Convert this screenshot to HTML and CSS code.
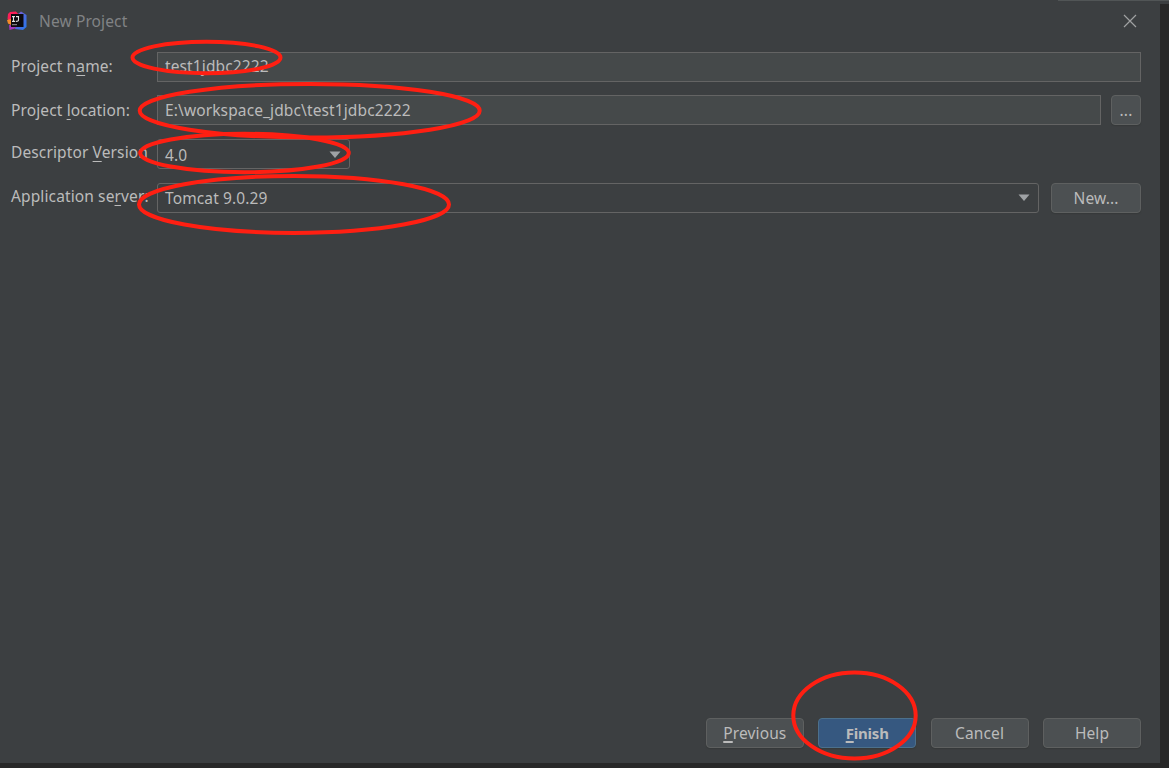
FILE: index.html
```html
<!DOCTYPE html>
<html lang="en">
<head>
<meta charset="UTF-8">
<meta name="viewport" content="width=device-width, initial-scale=1.0">
<title>New Project</title>
<link rel="stylesheet" href="styles.css">
</head>
<body>
<div class="dialog">
    <div class="title-bar">
        <svg class="logo" width="20" height="20" viewBox="0 0 20 20">
            <defs>
                <linearGradient id="blue" x1="0" y1="0" x2="1" y2="1">
                    <stop offset="0" stop-color="#a44fc0"/>
                    <stop offset="0.4" stop-color="#5767dc"/>
                    <stop offset="1" stop-color="#2478ee"/>
                </linearGradient>
            </defs>
            <path d="M11 3 L14 0.5 L19.5 4 V16 L16 19 L8 18 Z" fill="url(#blue)"/>
            <path d="M1 3 L3 1 L9 0.5 L12 4 L4 12 L0.5 8 Z" fill="#fb1e58"/>
            <path d="M0 9 L4 8 V14 L1 12.5 Z" fill="#f68b28"/>
            <path d="M2 14 L10 15 L8 17.5 L2.5 19 Z" fill="#a536bd"/>
            <rect x="4" y="3" width="12.5" height="13" fill="#0c0a10"/>
            <path d="M5 5.6 H8 M6.5 5.6 V10.4 M5 10.4 H8 M9 5.6 H11.5 V9 Q11.5 10.4 8.8 10.4" fill="none" stroke="#e4e4e4" stroke-width="1.1"/>
            <path d="M5 13.7 H10" stroke="#999" stroke-width="1"/>
        </svg>
        <span class="title">New Project</span>
        <svg class="close" width="14" height="14" viewBox="0 0 14 14">
            <path d="M1 1 L13 13 M13 1 L1 13"/>
        </svg>
    </div>

    <form class="form">
        <div class="form-row">
            <label>Project n<u>a</u>me:</label>
            <div class="field">test1jdbc2222</div>
        </div>
        <div class="form-row">
            <label>Project <u>l</u>ocation:</label>
            <div class="field location">E:\workspace_jdbc\test1jdbc2222</div>
            <button type="button" class="browse">...</button>
        </div>
        <div class="form-row">
            <label class="raised">Descriptor <u>V</u>ersion</label>
            <div class="select version">
                <span>4.0</span>
                <svg width="12" height="8" viewBox="0 0 12 8"><path d="M0.5 0.5 H11.5 L6 7 Z"/></svg>
            </div>
        </div>
        <div class="form-row">
            <label class="raised">Application se<u>r</u>ver:</label>
            <div class="select server">
                <span>Tomcat 9.0.29</span>
                <svg width="12" height="8" viewBox="0 0 12 8"><path d="M0.5 0.5 H11.5 L6 7 Z"/></svg>
            </div>
            <button type="button" class="new">New...</button>
        </div>
    </form>

    <div class="footer">
        <button type="button"><u>P</u>revious</button>
        <button type="button" class="primary"><u>F</u>inish</button>
        <button type="button">Cancel</button>
        <button type="button">Help</button>
    </div>
</div>

<div class="window-edge"></div>

<svg class="marks" width="1169" height="768" viewBox="0 0 1169 768">
    <ellipse cx="206.5" cy="57.5" rx="74" ry="15.7"/>
    <ellipse cx="309.7" cy="110.7" rx="170" ry="26.8"/>
    <ellipse cx="244.5" cy="153" rx="104.3" ry="19.2"/>
    <ellipse cx="294" cy="204.4" rx="155" ry="28.5"/>
    <ellipse cx="854.5" cy="715.5" rx="61.2" ry="43"/>
</svg>
</body>
</html>
```

FILE: styles.css
```css
body {
    margin: 0;
    width: 1169px;
    height: 768px;
    overflow: hidden;
    position: relative;
    background-color: #282828;
    color: #bbbbbb;
    font-family: 'Noto Sans', 'Open Sans', sans-serif;
    font-size: 15.5px;
    letter-spacing: 0.12px;
}

.dialog {
    width: 1160px;
    height: 763px;
    box-sizing: border-box;
    padding: 0 19px 15px 11px;
    display: flex;
    flex-direction: column;
    background-color: #3c3f41;
}

.title-bar {
    height: 42px;
    margin-left: -4px;
    display: flex;
    align-items: center;
}

.title {
    margin-left: 12px;
    flex: 1;
    color: #818385;
}

.close {
    margin-right: 4px;
}

.close path {
    stroke: #a0a1a2;
    stroke-width: 1.2;
}

.form {
    margin-top: 9.8px;
    display: flex;
    flex-direction: column;
    gap: 13.6px;
}

.form-row {
    height: 30px;
    display: flex;
    align-items: center;
}

label {
    width: 146px;
    flex-shrink: 0;
    padding-bottom: 1px;
    white-space: nowrap;
}

label.raised {
    padding-bottom: 4px;
}

u {
    text-decoration-thickness: 1px;
    text-underline-offset: 3px;
}

.field {
    flex: 1;
    height: 30px;
    box-sizing: border-box;
    padding: 0 7px;
    line-height: 27px;
    background-color: #45494a;
    border: 1px solid #646464;
}

.location {
    line-height: 28px;
}

.select {
    height: 30px;
    box-sizing: border-box;
    padding: 0 8px 0 7px;
    display: flex;
    align-items: center;
    justify-content: space-between;
    border: 1px solid #646464;
    border-radius: 3px;
}

.select path {
    fill: #9fa2a5;
}

.version {
    width: 193px;
    padding-top: 2px;
}

.server {
    flex: 1;
}

button {
    width: 98px;
    height: 30px;
    padding: 0;
    color: #bbbbbb;
    font-family: inherit;
    font-size: inherit;
    letter-spacing: 0.12px;
    background-color: #4c5052;
    border: 1px solid #5e6060;
    border-radius: 4px;
    box-shadow: 0 1px 1px #36393a;
}

.browse {
    width: 30px;
    margin-left: 10px;
}

.new {
    width: 90px;
    margin-left: 12px;
}

.primary {
    background-color: #365880;
    border-color: #4c708c;
    font-size: 15px;
    font-weight: bold;
    letter-spacing: -0.2px;
}

.footer {
    margin-top: auto;
    display: flex;
    justify-content: flex-end;
    gap: 14.4px;
}

.footer u {
    text-decoration-thickness: 2px;
    text-underline-offset: 2px;
}

/* border of the window behind the dialog */
.window-edge {
    position: absolute;
    top: 0;
    right: 0;
    width: 9px;
    height: 4px;
    background-color: #3c3f41;
}

.window-edge::before {
    content: '';
    position: absolute;
    top: 0;
    right: 0;
    width: 111px;
    height: 1px;
    background-color: #515556;
}

.marks {
    position: absolute;
    top: 0;
    left: 0;
    pointer-events: none;
}

.marks ellipse {
    fill: none;
    stroke: #ff1f12;
    stroke-width: 4;
}
```
